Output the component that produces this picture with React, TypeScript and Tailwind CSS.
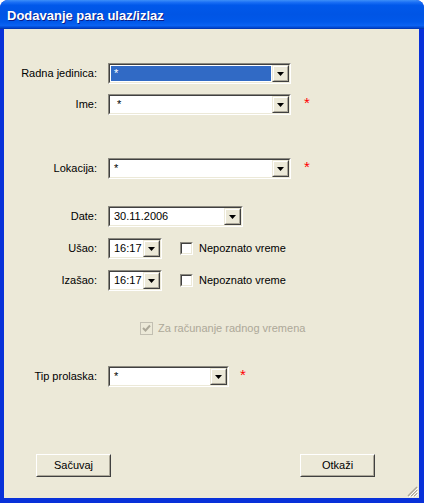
import React from 'react';

const font = "font-['Liberation_Sans','Arial',sans-serif]";

const Sunken = ({ className = '', fill = 'bg-white', children }: { className?: string; fill?: string; children?: React.ReactNode }) => (
  <div className={`border border-t-[#8c8a80] border-l-[#8c8a80] border-b-white border-r-white ${className}`}>
    <div className={`h-full flex border border-t-[#404040] border-l-[#404040] border-b-[#ece9d8] border-r-[#ece9d8] ${fill}`}>
      {children}
    </div>
  </div>
);

const DropBtn = () => (
  <div className="w-[17px] h-full border border-t-[#ece9d8] border-l-[#ece9d8] border-b-[#404040] border-r-[#404040] bg-[#ece9d8]">
    <div className="h-full flex items-center justify-center border border-t-white border-l-white border-b-[#aca899] border-r-[#aca899]">
      <svg width="7" height="4" viewBox="0 0 7 4">
        <polygon points="0,0 7,0 3.5,4" fill="#000" />
      </svg>
    </div>
  </div>
);

const Combo = ({ width, value = '*', selected = false, pad = 'pl-[3px]' }: { width: string; value?: string; selected?: boolean; pad?: string }) => (
  <Sunken className={`${width} h-[21px]`}>
    <div className="flex-1 flex items-stretch p-px">
      <div className={`flex-1 flex items-center text-[11px] leading-[15px] ${pad} ${selected ? 'bg-[#316ac5] text-white' : 'text-black'}`}>
        {value}
      </div>
    </div>
    <DropBtn />
  </Sunken>
);

const Check = ({ disabled = false }: { disabled?: boolean }) => (
  disabled ? (
    <div className="w-[13px] h-[13px] border border-[#c2bfb2] bg-[#ece9d8] flex items-center justify-center">
      <svg width="9" height="9" viewBox="0 0 9 9">
        <polyline points="1,4 3.5,6.5 8,1.5" fill="none" stroke="#aca899" strokeWidth="2" />
      </svg>
    </div>
  ) : (
    <Sunken className="w-[13px] h-[13px]" />
  )
);

const Star = ({ ml }: { ml: string }) => (
  <span className={`${ml} text-[15px] leading-none text-[#ff0000] -mt-[5px]`}>*</span>
);

const Row = ({ label, className = '', children }: { label: string; className?: string; children: React.ReactNode }) => (
  <div className={`flex items-center h-[21px] ${className}`}>
    <div className="w-[81px] text-right text-[11px] text-black">{label}</div>
    <div className="ml-[11px] flex items-center">{children}</div>
  </div>
);

const Button = ({ text }: { text: string }) => (
  <div className="w-[75px] h-[23px] border border-t-white border-l-white border-b-[#404040] border-r-[#404040] bg-[#ece9d8]">
    <div className="h-full flex items-center justify-center border border-t-[#ece9d8] border-l-[#ece9d8] border-b-[#aca899] border-r-[#aca899] text-[11px] text-black">
      {text}
    </div>
  </div>
);

export default function App() {
  return (
    <div className={`w-[424px] h-[503px] flex flex-col rounded-t-[8px] overflow-hidden bg-[#0831d9] ${font}`}>
      <div className="h-[29px] shrink-0 flex items-start pl-[7px] pt-[8px] bg-[linear-gradient(to_bottom,#3d8ff8_0%,#1a6ff5_8%,#0058ea_18%,#0055e5_50%,#0058ea_75%,#0a62f2_88%,#0044cc_96%,#0030a8_100%)]">
        <span className="text-[13px] font-bold leading-[16px] text-white [text-shadow:1px_1px_0_#0a1e8a]">
          Dodavanje para ulaz/izlaz
        </span>
      </div>
      <div className="flex-1 flex pl-[4px] pr-[5px] pb-[5px]">
        <div className="relative flex-1 flex flex-col bg-[#ece9d8] pl-[12px] pt-[34px]">
          <Row label="Radna jedinica:">
            <Combo width="w-[183px]" selected />
          </Row>
          <Row label="Ime:" className="mt-[10px]">
            <Combo width="w-[183px]" pad="pl-[6px]" />
            <Star ml="ml-[13px]" />
          </Row>
          <Row label="Lokacija:" className="mt-[43px]">
            <Combo width="w-[183px]" />
            <Star ml="ml-[13px]" />
          </Row>
          <Row label="Date:" className="mt-[27px]">
            <Combo width="w-[135px]" value="30.11.2006" />
          </Row>
          <Row label="Ušao:" className="mt-[11px]">
            <Combo width="w-[54px]" value="16:17" />
            <div className="ml-[18px] flex items-center">
              <Check />
              <span className="ml-[6px] text-[11px] text-black">Nepoznato vreme</span>
            </div>
          </Row>
          <Row label="Izašao:" className="mt-[11px]">
            <Combo width="w-[54px]" value="16:17" />
            <div className="ml-[18px] flex items-center">
              <Check />
              <span className="ml-[6px] text-[11px] text-black">Nepoznato vreme</span>
            </div>
          </Row>
          <Row label="" className="mt-[27px]">
            <div className="ml-[32px] flex items-center">
              <Check disabled />
              <span className="ml-[5px] text-[11px] text-[#aca899]">Za računanje radnog vremena</span>
            </div>
          </Row>
          <Row label="Tip prolaska:" className="mt-[27px]">
            <Combo width="w-[121px]" />
            <Star ml="ml-[11px]" />
          </Row>
          <div className="mt-[67px] flex justify-between pl-[20px] pr-[44px]">
            <Button text="Sačuvaj" />
            <Button text="Otkaži" />
          </div>
          <svg className="absolute right-[1px] bottom-[1px]" width="12" height="12" viewBox="0 0 12 12">
            <line x1="11" y1="2" x2="2" y2="11" stroke="#aca899" strokeWidth="1.5" />
            <line x1="11" y1="5" x2="5" y2="11" stroke="#aca899" strokeWidth="1.5" />
            <line x1="11" y1="8" x2="8" y2="11" stroke="#aca899" strokeWidth="1.5" />
            <line x1="12" y1="3" x2="3" y2="12" stroke="#fff" strokeWidth="1" />
            <line x1="12" y1="6" x2="6" y2="12" stroke="#fff" strokeWidth="1" />
            <line x1="12" y1="9" x2="9" y2="12" stroke="#fff" strokeWidth="1" />
          </svg>
        </div>
      </div>
    </div>
  );
}
